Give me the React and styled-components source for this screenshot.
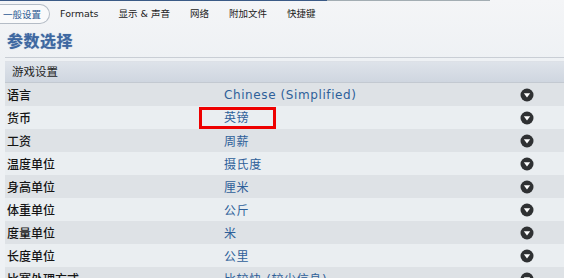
import React from "react";
import styled, { createGlobalStyle } from "styled-components";

const GlobalStyle = createGlobalStyle`
  body {
    margin: 0;
    background: #eef1f4;
    font-family: "DejaVu Sans", "Noto Sans CJK SC", sans-serif;
    overflow: hidden;
  }
`;

const tabs = ["一般设置", "Formats", "显示 & 声音", "网络", "附加文件", "快捷键"];

const rows = [
  ["语言", "Chinese (Simplified)"],
  ["货币", "英镑", true],
  ["工资", "周薪"],
  ["温度单位", "摄氏度"],
  ["身高单位", "厘米"],
  ["体重单位", "公斤"],
  ["度量单位", "米"],
  ["长度单位", "公里"],
  ["比赛处理方式", "比较快 (较少信息)"],
];

const DropIcon = () => (
  <svg width="14" height="14" viewBox="0 0 14 14">
    <circle cx="7" cy="7" r="6.5" fill="#2f3133" />
    <path d="M3.8 5.2 H10.2 L7 9.4 Z" fill="#ffffff" />
  </svg>
);

const App = () => (
  <Root>
    <GlobalStyle />
    <TopStrip>
      <Segment $w={327} $c="#3b5a86" />
      <Segment $w={163} $c="#a3adb3" />
    </TopStrip>
    <TabBar>
      {tabs.map((t, i) => (
        <Tab key={t} $active={i === 0}>
          {t}
        </Tab>
      ))}
    </TabBar>
    <Title>参数选择</Title>
    <Panel>
      <SectionHeader>游戏设置</SectionHeader>
      {rows.map(([label, value, marked], i) => (
        <Row key={label} $odd={i % 2 === 1}>
          <Label>{label}</Label>
          <Value>
            {marked ? <Marked>{value}</Marked> : value}
          </Value>
          <IconCell>
            <DropIcon />
          </IconCell>
        </Row>
      ))}
    </Panel>
  </Root>
);

export default App;

const Root = styled.div`
  width: 564px;
  height: 278px;
  overflow: hidden;
  background: linear-gradient(#f4f5f7, #eef1f4 60px);
`;

const TopStrip = styled.div`
  display: flex;
  height: 1px;
`;

const Segment = styled.div`
  width: ${(p) => p.$w}px;
  background: ${(p) => p.$c};
`;

const TabBar = styled.div`
  display: flex;
  align-items: center;
  height: 23px;
  margin-top: 1px;
`;

const Tab = styled.div`
  font-size: 9.5px;
  color: ${(p) => (p.$active ? "#2d5b93" : "#222")};
  padding: ${(p) => (p.$active ? "0 8px 0 3px" : "0 10px")};
  height: 20px;
  line-height: 19px;
  box-sizing: border-box;
  border: ${(p) => (p.$active ? "1px solid #b4bcc6" : "none")};
  border-left: none;
  border-radius: ${(p) => (p.$active ? "0 11px 11px 0" : "0")};
  background: ${(p) => (p.$active ? "#f9fafb" : "transparent")};
  white-space: pre;
`;

const Title = styled.div`
  font-family: "Noto Sans CJK SC", sans-serif;
  font-size: 16px;
  font-weight: bold;
  color: #3d67a1;
  padding: 4px 0 0 7px;
  height: 23px;
  line-height: 23px;
  text-shadow: 0 0 1px rgba(61, 103, 161, 0.6);
  letter-spacing: 0.5px;
`;

const Panel = styled.div`
  margin-left: 5px;
  margin-top: 5px;
  border-top: 1px solid #c9ced5;
  padding-top: 3px;
`;

const SectionHeader = styled.div`
  height: 20px;
  line-height: 20px;
  font-size: 11.5px;
  color: #1e1e1e;
  padding-left: 7px;
  border-top: 1px solid #dde1e7;
  border-bottom: 1px solid #c3c9d1;
  background: linear-gradient(#dee3ea, #cfd6e0);
`;

const Row = styled.div`
  display: grid;
  grid-template-columns: 217px 1fr 44px;
  align-items: center;
  height: 23px;
  background: ${(p) => (p.$odd ? "#eaeef1" : "#dee2e6")};
`;

const Label = styled.div`
  font-size: 12px;
  font-weight: 500;
  color: #151515;
  padding-left: 2px;
`;

const Value = styled.div`
  font-size: 12px;
  color: #2e5f99;
  padding-left: 2px;
  letter-spacing: 0.6px;
  white-space: nowrap;
`;

const Marked = styled.span`
  display: inline-block;
  margin-left: -25px;
  padding-left: 22px;
  width: 49px;
  height: 16px;
  line-height: 16px;
  border: 3px solid #ee0000;
`;

const IconCell = styled.div`
  display: flex;
  align-items: center;
`;
